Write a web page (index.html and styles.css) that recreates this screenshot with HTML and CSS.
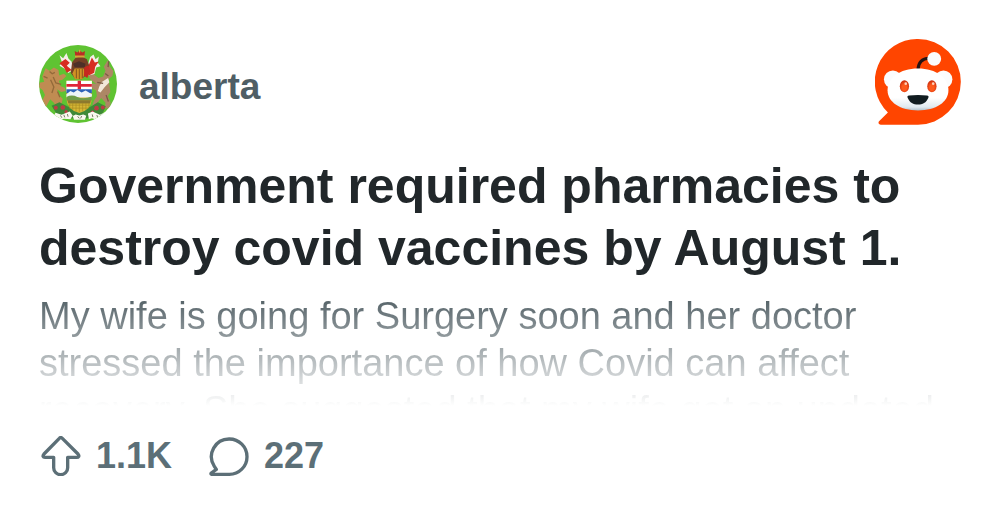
FILE: index.html
```html
<!DOCTYPE html>
<html lang="en">
<head>
  <meta charset="utf-8">
  <title>alberta</title>
  <link rel="stylesheet" href="styles.css">
</head>
<body>
  <article class="card">
    <header class="header">
      <div class="community">
        <svg class="avatar" viewBox="26 27 236 236" aria-hidden="true">
          <defs>
            <clipPath id="round"><circle cx="144" cy="145" r="118"/></clipPath>
          </defs>
          <g clip-path="url(#round)">
            <rect x="26" y="27" width="236" height="236" fill="#5fc332"/>
            <!-- lion -->
            <path d="M46 97l12 8 13-10 14 8 2 16 14-5 8 7-12 11-11 3 5 16 13 5 3 10-14 3-12-8 5 17 12 12-4 16-11 14-15-3 5-13-13-13-9 16-5 10-14-4 4-18 8-17-7-15-11-8 2-14 14-3-6-16z" fill="#c08c52"/>
            <path d="M58 107l8 7 8-4M69 124l8 18 16 4M61 132l10 22-6 18M82 168l7 17M40 122l12 5" fill="none" stroke="#936a3a" stroke-width="4"/>
            <!-- pronghorn -->
            <path d="M234 73l6 19 11 14-3 15-12 10 3 17 3 21-8 13 9 20-5 17-12-1 1-17-13-14-12 16-3 14-13-2 6-19 9-14-2-17-15-8-13 5-3-11 13-9 18 3-20-17-2-12 13-1 16 12 14-5 7-17-5-12z" fill="#ad8765"/>
            <path d="M216 139l19-12 4 13-14 14-13 17-8-5 5-15z" fill="#f3e8da"/>
            <path d="M237 76l-2 18M226 113l10 8M220 143l-18-3M229 178l7 20" fill="none" stroke="#7d5b45" stroke-width="4"/>
            <!-- mantling -->
            <path d="M88 58l11 9 10-16 6 17 10 10 4 25-14 9-14-15-13-7 8-9z" fill="#f5eee9"/>
            <path d="M88 82l18-13 13 12-9 9 15 13-15 8-9-17z" fill="#d72d21"/>
            <path d="M181 63l10-7 6 14 10-8-3 19 8 10-13 4-5 20-18 4-7-17z" fill="#f5eee9"/>
            <path d="M177 87l9-22 9 15 12-3-11 16-3 18-16 8-10-17z" fill="#d72d21"/>
            <!-- helmet and beaver -->
            <path d="M126 80l10-14 18-6 17 10 7 19-6 26-17 16-20-3-13-16z" fill="#754025"/>
            <path d="M129 84l18-8 20 8-3 10h-30z" fill="#4d3028"/>
            <path d="M134 98h27l5 14-9 19h-22l-8-18z" fill="#d09225"/>
            <path d="M139 100v28M148 100v30M157 99v28" stroke="#84551e" stroke-width="3"/>
            <path d="M163 94l13-6 5 18-9 21-10-7z" fill="#c5291f"/>
            <!-- crown -->
            <path d="M134 45l8 5 7-7 8 7 8-5-2 18h-27z" fill="#ba2d24"/>
            <path d="M135 59h29v6h-29zM147 41h4v9h-4z" fill="#d7a43a"/>
            <!-- grass mound -->
            <path d="M64 211l24-11 25 13 35 14 35-14 21-13 24 12-12 28-66 13-68-13z" fill="#3f8937"/>
            <!-- shield -->
            <path d="M109 135h77v57q-3 32-38 41-36-9-39-41z" fill="#d6b735"/>
            <path d="M109 135h77v35h-77z" fill="#fff"/>
            <path d="M143 135h10v27h-10zM109 145h77v8h-77z" fill="#df2438"/>
            <path d="M109 161h77v12h-77z" fill="#2e63b7"/>
            <path d="M109 176l12-10 10 5 11-8 13 8 12-6 19 11v10h-77z" fill="#edf5f7"/>
            <path d="M109 184q16-8 33 0t44-1v12h-77z" fill="#6e9d48"/>
            <path d="M112 194h71l-2 10h-66z" fill="#8c792e"/>
            <path d="M119 205v14M128 202v22M138 202v27M148 202v28M158 202v26M168 202v21M177 202v14M114 209h67M119 218h57" stroke="#a88a22" stroke-width="2"/>
            <!-- wild roses -->
            <g fill="#bc3c45">
              <circle cx="77" cy="217" r="6"/><circle cx="98" cy="216" r="7"/>
              <circle cx="200" cy="218" r="7"/><circle cx="219" cy="216" r="6"/>
              <circle cx="108" cy="229" r="5"/><circle cx="188" cy="230" r="5"/>
            </g>
            <!-- motto ribbon -->
            <path d="M76 232l18 6 25-10 9 12-7 12-20-2-14 6-18-12zM137 237l11 3 12-3 9 4-4 12h-33l-4-11zM174 234l14-6 22 10 14-7 5 11-18 14-25-7-9 3z" fill="#faf8ef"/>
            <path d="M91 240l4 7M101 238l3 8M112 236l2 8M143 243l5 6M155 242l-3 7M187 237l2 8M201 239l3 8" stroke="#777c65" stroke-width="3"/>
          </g>
        </svg>
        <span class="name">alberta</span>
      </div>
      <svg class="logo" viewBox="28 27 260 260" role="img" aria-label="Reddit">
        <defs>
          <linearGradient id="head" x1="0" y1="0" x2="0" y2="1">
            <stop offset=".7" stop-color="#fff"/>
            <stop offset=".92" stop-color="#dfe9ef"/>
            <stop offset="1" stop-color="#b0c0ca"/>
          </linearGradient>
          <radialGradient id="eye" cx=".5" cy=".6" r=".6">
            <stop offset=".4" stop-color="#ff5a1c"/>
            <stop offset="1" stop-color="#c92a0b"/>
          </radialGradient>
        </defs>
        <path d="M158 27a129 129 0 0 1 0 259H46c-7 0-10-6-5-11l26-26A129 129 0 0 1 158 27z" fill="#ff4500"/>
        <path d="M158 119c1-20 10-33 33-34" fill="none" stroke="#251313" stroke-width="9"/>
        <circle cx="207" cy="87" r="21" fill="#fbfcfd"/>
        <circle cx="82" cy="149" r="27" fill="#fbfcfd"/>
        <circle cx="235" cy="149" r="27" fill="#fbfcfd"/>
        <path d="M158 116c56 0 92 29 92 66 0 36-38 61-92 61s-92-25-92-61c0-37 36-66 92-66z" fill="url(#head)"/>
        <ellipse cx="117" cy="170" rx="14" ry="18" fill="url(#eye)"/>
        <ellipse cx="200" cy="170" rx="14" ry="18" fill="url(#eye)"/>
        <circle cx="121" cy="162" r="4" fill="#ffd0b8"/>
        <circle cx="204" cy="162" r="4" fill="#ffd0b8"/>
        <path d="M131 198q27-3 54 0c5 0 6 3 4 7-6 14-17 20-31 20s-25-6-31-20c-2-4-1-7 4-7z" fill="#111c20"/>
      </svg>
    </header>

    <h1 class="title">Government required pharmacies to destroy covid vaccines by August 1.</h1>
    <p class="excerpt">My wife is going for Surgery soon and her doctor stressed the importance of how Covid can affect recovery. She suggested that my wife get an updated</p>

    <footer class="stats">
      <div class="stat">
        <svg class="stat-icon" viewBox="33 42 120 120" aria-hidden="true">
          <path d="M88 49L42 96c-5 6-3 10 3 10h26v31a21 21 0 0 0 42 0v-31h27c6 0 9-4 4-10L97 49q-5-5-9 0z"/>
        </svg>
        <span>1.1K</span>
      </div>
      <div class="stat">
        <svg class="stat-icon" viewBox="539 42 120 120" aria-hidden="true">
          <path d="M600 51a53 53 0 0 1 0 106h-53q-4-1-1-4l15-11-6-9A53 53 0 0 1 600 51z"/>
        </svg>
        <span>227</span>
      </div>
    </footer>
  </article>
</body>
</html>
```
FILE: styles.css
```css
body {
  margin: 0;
  background: #fff;
  font-family: "Liberation Sans", Arial, sans-serif;
}

.card {
  padding: 39px;
}

.header {
  display: flex;
  justify-content: space-between;
  align-items: center;
  margin-bottom: 30px;
}

.community {
  display: flex;
  align-items: center;
  gap: 22px;
  padding-top: 3px;
}

.avatar {
  width: 78px;
  height: 78px;
}

.name {
  padding-top: 6px;
  font-size: 37px;
  font-weight: 700;
  line-height: 47px;
  color: #4f5e65;
}

.logo {
  width: 86px;
  height: 86px;
}

.title {
  margin: 0 0 14px;
  font-size: 50px;
  font-weight: 700;
  line-height: 62px;
  color: #21272a;
}

/* third line is cut off and fades into the page */
.excerpt {
  max-height: 113px;
  margin: 0 0 26px;
  overflow: hidden;
  font-size: 38px;
  line-height: 47px;
  color: transparent;
  background: linear-gradient(#4c5a60, #fff);
  -webkit-background-clip: text;
  background-clip: text;
}

.stats {
  display: flex;
  gap: 37px;
  padding-left: 2px;
}

.stat {
  display: flex;
  align-items: center;
  gap: 15px;
  font-size: 36px;
  font-weight: 700;
  line-height: 47px;
  color: #5c6f77;
}

.stat-icon {
  width: 40px;
  height: 40px;
  fill: none;
  stroke: currentColor;
  stroke-width: 10;
  stroke-linejoin: round;
}
```
